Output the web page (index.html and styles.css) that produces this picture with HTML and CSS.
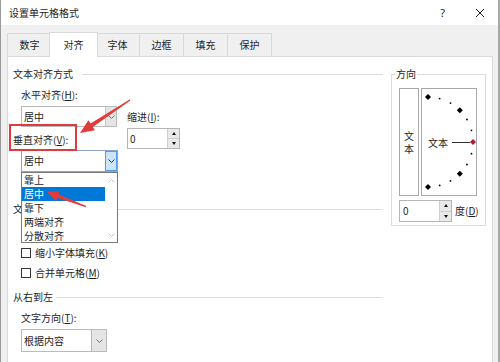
FILE: index.html
```html
<!DOCTYPE html>
<html lang="zh-CN">
<head>
<meta charset="utf-8">
<title>设置单元格格式</title>
<link rel="stylesheet" href="styles.css">
</head>
<body>
<div class="window">
  <div class="titlebar">
    <span class="title">设置单元格格式</span>
    <span class="help">?</span>
    <span class="close"><svg width="10" height="10" viewBox="0 0 10 10"><path d="M1 1L9 9M9 1L1 9" stroke="#222" stroke-width="1" fill="none"/></svg></span>
  </div>
  <div class="tabs">
    <div class="tab">数字</div>
    <div class="tab active">对齐</div>
    <div class="tab">字体</div>
    <div class="tab">边框</div>
    <div class="tab">填充</div>
    <div class="tab">保护</div>
  </div>
  <div class="panel">
    <div class="left">
      <div class="group-head g1"><span>文本对齐方式</span></div>
      <div class="align-block">
        <div class="col-a">
          <div class="lbl lbl-h">水平对齐(<u>H</u>):</div>
          <div class="combo combo-h"><span class="val">居中</span><span class="btn"><svg width="7" height="4" viewBox="0 0 7 4"><polyline points="0.5,0.5 3.5,3.5 6.5,0.5" fill="none" stroke="#777" stroke-width="1"/></svg></span></div>
          <div class="lbl lbl-v">垂直对齐(<u>V</u>):</div>
          <div class="combo combo-v"><span class="val">居中</span><span class="btn"><svg width="7" height="4" viewBox="0 0 7 4"><polyline points="0.5,0.5 3.5,3.5 6.5,0.5" fill="none" stroke="#333" stroke-width="1"/></svg></span></div>
        </div>
        <div class="col-b">
          <div class="lbl">缩进(<u>I</u>):</div>
          <div class="spin spin-indent"><span class="val">0</span><span class="arrows"><span class="up"></span><span class="down"></span></span></div>
        </div>
      </div>
      <div class="group-head g2"><span>文本控制</span></div>
      <div class="check c1"><span class="box"></span><span>缩小字体填充(<u>K</u>)</span></div>
      <div class="check c2"><span class="box"></span><span>合并单元格(<u>M</u>)</span></div>
      <div class="group-head g3"><span>从右到左</span></div>
      <div class="lbl lbl-t">文字方向(<u>T</u>):</div>
      <div class="combo combo-t"><span class="val">根据内容</span><span class="btn"><svg width="7" height="4" viewBox="0 0 7 4"><polyline points="0.5,0.5 3.5,3.5 6.5,0.5" fill="none" stroke="#777" stroke-width="1"/></svg></span></div>
    </div>
    <fieldset class="orient">
      <legend>方向</legend>
      <div class="orient-row">
        <div class="vbox"><span>文</span><span>本</span></div>
        <div class="dial">
          <svg width="54" height="106" viewBox="0 0 54 106">
            <g fill="#000">
              <polygon points="6,5 9,8 6,11 3,8"/>
              <circle cx="17.65" cy="9.53" r="0.9"/>
              <circle cx="28.5" cy="14.03" r="0.9"/>
              <polygon points="37.82,18.18 40.82,21.18 37.82,24.18 34.82,21.18"/>
              <circle cx="44.97" cy="30.5" r="0.9"/>
              <circle cx="49.47" cy="41.35" r="0.9"/>
              <circle cx="49.47" cy="64.65" r="0.9"/>
              <circle cx="44.97" cy="75.5" r="0.9"/>
              <polygon points="37.82,81.82 40.82,84.82 37.82,87.82 34.82,84.82"/>
              <circle cx="28.5" cy="91.97" r="0.9"/>
              <circle cx="17.65" cy="96.47" r="0.9"/>
              <polygon points="6,95 9,98 6,101 3,98"/>
            </g>
            <line x1="30" y1="53.5" x2="48" y2="53.5" stroke="#333" stroke-width="1"/>
            <polygon points="51,50 54,53 51,56 48,53" fill="#b01c2e"/>
            <text x="6" y="57.5" font-size="10" font-family="Noto Sans CJK SC, sans-serif" fill="#222">文本</text>
          </svg>
        </div>
      </div>
      <div class="deg-row">
        <div class="spin spin-deg"><span class="val">0</span><span class="arrows"><span class="up"></span><span class="down"></span></span></div>
        <span class="deg-label">度(<u>D</u>)</span>
      </div>
    </fieldset>
  </div>
</div>

<div class="dropdown">
  <div class="items">
    <div class="item">靠上</div>
    <div class="item sel">居中</div>
    <div class="item">靠下</div>
    <div class="item">两端对齐</div>
    <div class="item">分散对齐</div>
  </div>
  <div class="sb">
    <svg width="7" height="4" viewBox="0 0 7 4"><polyline points="0.5,3.5 3.5,0.5 6.5,3.5" fill="none" stroke="#c4c4c4" stroke-width="1"/></svg>
    <svg width="7" height="4" viewBox="0 0 7 4"><polyline points="0.5,0.5 3.5,3.5 6.5,0.5" fill="none" stroke="#c4c4c4" stroke-width="1"/></svg>
  </div>
</div>

<div class="redbox"></div>

<svg class="annot" width="500" height="362" viewBox="0 0 500 362">
  <polygon fill="#e23b3b" points="80,133 95,130.3 92.8,127 130.4,100.6 129.6,99.4 90.6,123.6 88.4,120.3"/>
  <polygon fill="#e23b3b" points="46.7,191.7 59.7,191.3 58.5,194.3 86.25,206.05 85.75,207.35 57.3,197.7 56.1,200.7"/>
</svg>
</body>
</html>
```
FILE: styles.css
```css
* { box-sizing: border-box; }
html, body { margin: 0; padding: 0; }
body {
  width: 500px;
  height: 362px;
  overflow: hidden;
  position: relative;
  font-family: "Noto Sans CJK SC", "Microsoft YaHei", sans-serif;
  font-size: 10px;
  line-height: 12px;
  color: #1e1e1e;
  background: #f0f0f0;
}
u { text-decoration: underline; text-underline-offset: 1px; }

.window {
  height: 362px;
  border-left: 1px solid #9a9a9a;
  border-right: 2px solid #a8a8a8;
  background: #f0f0f0;
}

.titlebar {
  height: 25px;
  background: #fff;
  display: flex;
  align-items: center;
  padding-left: 8px;
}
.help {
  margin-left: auto;
  margin-right: 30px;
  font-family: "Noto Sans", sans-serif;
  font-size: 11px;
  color: #222;
}
.close { display: flex; margin-right: 13px; }

.tabs {
  display: flex;
  align-items: flex-end;
  margin-top: 7px;
  padding-left: 6px;
}
.tab {
  width: 45px;
  height: 23px;
  border: 1px solid #d9d9d9;
  border-bottom: none;
  margin-right: -1px;
  text-align: center;
  line-height: 22px;
  background: #f0f0f0;
}
.tab.active {
  width: 49px;
  height: 25px;
  margin-left: -2px;
  margin-right: -3px;
  margin-bottom: -1px;
  background: #fff;
  line-height: 24px;
  z-index: 1;
}

.panel {
  margin-left: 6px;
  width: 486px;
  height: 306px;
  background: #fff;
  border: 1px solid #d9d9d9;
  border-bottom: none;
  display: flex;
  align-items: flex-start;
  padding-left: 5px;
}
.left { width: 370px; }

.group-head { display: flex; align-items: center; height: 12px; }
.group-head::after {
  content: "";
  flex: 1;
  height: 1px;
  background: #dcdcdc;
  margin-left: 9px;
}
.g1 { margin-top: 11px; }
.g2 { margin-top: 31px; }
.g3 { margin-top: 12px; }
.g3::after { margin-left: 3px; }

.lbl { height: 12px; white-space: nowrap; }

.align-block { display: flex; padding-left: 8px; }
.col-a { width: 97px; }
.lbl-h { margin-top: 9px; }
.lbl-v { margin-top: 7px; margin-left: -8px; }
.col-b { margin-left: 9px; padding-top: 31px; }

.combo {
  display: flex;
  border: 1px solid #bababa;
  background: #fff;
}
.combo .val { flex: 1; padding-left: 2px; display: flex; align-items: center; }
.combo .btn {
  width: 11px;
  display: flex;
  align-items: center;
  justify-content: center;
  background: #e5e5e5;
  border-left: 1px solid #c6c6c6;
}
.combo-h { width: 96px; height: 21px; margin-top: 5px; }
.combo-v { width: 97px; height: 22px; margin-top: 4px; border-color: #8aa6c8; }
.combo-v .btn { width: 12px; background: #cce4f7; border: 1px solid #569de5; }
.combo-t { width: 86px; height: 23px; margin-top: 5px; margin-left: 8px; }
.combo-t .btn { width: 15px; border-left-color: #b4b4b4; }

.spin { display: flex; border: 1px solid #b6b6b6; background: #fff; }
.spin .val { flex: 1; padding-left: 2px; display: flex; align-items: center; }
.spin .arrows {
  width: 12px;
  display: flex;
  flex-direction: column;
  border-left: 1px solid #cfcfcf;
}
.spin .arrows span {
  flex: 1;
  display: flex;
  align-items: center;
  justify-content: center;
  background: #e9e9e9;
}
.spin .arrows span + span { border-top: 1px solid #cfcfcf; }
.spin .up::before {
  content: "";
  border-left: 2.5px solid transparent;
  border-right: 2.5px solid transparent;
  border-bottom: 3px solid #111;
}
.spin .down::before {
  content: "";
  border-left: 2.5px solid transparent;
  border-right: 2.5px solid transparent;
  border-top: 3px solid #111;
}
.spin-indent { width: 53px; height: 21px; margin-top: 5px; }
.spin-deg { width: 53px; height: 22px; }
.spin-deg .val { padding-left: 3px; }

.check { display: flex; align-items: center; height: 12px; margin-left: 8px; }
.check .box {
  width: 10px;
  height: 10px;
  border: 1px solid #333;
  background: #fff;
  margin-right: 4px;
}
.c1 { margin-top: 32px; }
.c2 { margin-top: 8px; }
.lbl-t { margin-top: 9px; margin-left: 8px; }

.orient {
  margin: 11px 0 0 8px;
  width: 95px;
  padding: 0 6px 3px 7px;
  border: 1px solid #dcdcdc;
  min-width: 0;
}
.orient legend {
  padding: 0 1px;
  margin-left: -4px;
  line-height: 12px;
  height: 12px;
}
.orient-row { display: flex; margin-top: 8px; height: 108px; }
.vbox {
  width: 20px;
  border: 1px solid #a8a8a8;
  display: flex;
  flex-direction: column;
  align-items: center;
  justify-content: center;
  line-height: 13px;
}
.dial { width: 56px; margin-left: 2px; border: 1px solid #a8a8a8; }
.dial svg { display: block; }
.deg-row { display: flex; align-items: center; margin-top: 4px; }
.deg-label { margin-left: 3px; }

.dropdown {
  position: absolute;
  left: 21px;
  top: 172px;
  width: 97px;
  height: 71px;
  border: 1px solid #7a7a7a;
  background: #fff;
  display: flex;
}
.dropdown .items { flex: 1; }
.dropdown .item { height: 14px; line-height: 14px; padding-left: 2px; }
.dropdown .item.sel { background: #0078d7; color: #fff; }
.dropdown .sb {
  width: 12px;
  display: flex;
  flex-direction: column;
  justify-content: space-between;
  align-items: center;
  padding: 6px 0 5px;
}
.dropdown .sb svg { display: block; }

.redbox {
  position: absolute;
  left: 9px;
  top: 124px;
  width: 68px;
  height: 27px;
  border: 2px solid #e0393e;
}
.annot { position: absolute; left: 0; top: 0; pointer-events: none; }
```
